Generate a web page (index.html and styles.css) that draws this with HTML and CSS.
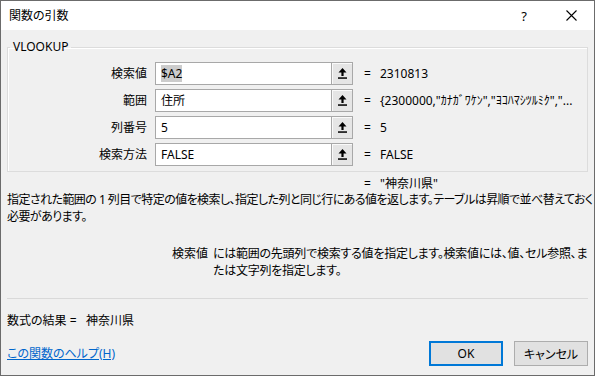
FILE: index.html
```html
<!DOCTYPE html>
<html lang="ja">
<head>
    <meta charset="UTF-8">
    <title>関数の引数</title>
    <link rel="stylesheet" href="styles.css">
</head>
<body>
    <div class="dialog">
        <div class="titlebar">
            <span class="title">関数の引数</span>
            <span class="help-btn">?</span>
            <span class="close-btn">
                <svg width="11" height="11" viewBox="0 0 11 11"><path d="M0.5 0.5 L10.5 10.5 M10.5 0.5 L0.5 10.5" stroke="#000" stroke-width="1.1" fill="none"/></svg>
            </span>
        </div>

        <div class="content">
            <fieldset class="args">
                <legend>VLOOKUP</legend>

                <div class="arg-row">
                    <span class="arg-label">検索値</span>
                    <div class="arg-input"><span class="selected">$A2</span></div>
                    <button class="ref-btn"><svg width="9" height="11" viewBox="0 0 9 11"><path d="M4.5 0 L8.5 4.5 H5.6 V8 H3.4 V4.5 H0.5 Z" fill="#000"/><rect x="0" y="9.3" width="9" height="1.5" fill="#000"/></svg></button>
                    <span class="eq">=</span>
                    <span class="arg-value">2310813</span>
                </div>

                <div class="arg-row">
                    <span class="arg-label">範囲</span>
                    <div class="arg-input">住所</div>
                    <button class="ref-btn"><svg width="9" height="11" viewBox="0 0 9 11"><path d="M4.5 0 L8.5 4.5 H5.6 V8 H3.4 V4.5 H0.5 Z" fill="#000"/><rect x="0" y="9.3" width="9" height="1.5" fill="#000"/></svg></button>
                    <span class="eq">=</span>
                    <span class="arg-value">{2300000,"ｶﾅｶﾞﾜｹﾝ","ﾖｺﾊﾏｼﾂﾙﾐｸ","...</span>
                </div>

                <div class="arg-row">
                    <span class="arg-label">列番号</span>
                    <div class="arg-input">5</div>
                    <button class="ref-btn"><svg width="9" height="11" viewBox="0 0 9 11"><path d="M4.5 0 L8.5 4.5 H5.6 V8 H3.4 V4.5 H0.5 Z" fill="#000"/><rect x="0" y="9.3" width="9" height="1.5" fill="#000"/></svg></button>
                    <span class="eq">=</span>
                    <span class="arg-value">5</span>
                </div>

                <div class="arg-row">
                    <span class="arg-label">検索方法</span>
                    <div class="arg-input">FALSE</div>
                    <button class="ref-btn"><svg width="9" height="11" viewBox="0 0 9 11"><path d="M4.5 0 L8.5 4.5 H5.6 V8 H3.4 V4.5 H0.5 Z" fill="#000"/><rect x="0" y="9.3" width="9" height="1.5" fill="#000"/></svg></button>
                    <span class="eq">=</span>
                    <span class="arg-value">FALSE</span>
                </div>
            </fieldset>

            <div class="result-row"><span class="result-eq">=</span><span>"神奈川県"</span></div>

            <p class="desc">指定された範囲の 1 列目で特定の値を検索し、指定した列と同じ行にある値を返します。テーブルは昇順で並べ替えておく<br>必要があります。</p>

            <div class="arg-help">
                <span class="arg-help-name">検索値</span>
                <p>には範囲の先頭列で検索する値を指定します。検索値には、値、セル参照、ま<br>たは文字列を指定します。</p>
            </div>

            <div class="separator"></div>

            <div class="formula-result">数式の結果 =&nbsp;&nbsp;&nbsp;神奈川県</div>

            <div class="footer">
                <a href="#" class="help-link">この関数のヘルプ(H)</a>
                <div class="buttons">
                    <button class="btn primary">OK</button>
                    <button class="btn">キャンセル</button>
                </div>
            </div>
        </div>
    </div>
</body>
</html>
```

FILE: styles.css
```css
* {
    margin: 0;
    padding: 0;
    box-sizing: border-box;
}

body {
    font-family: "Noto Sans", "Noto Sans CJK JP", sans-serif;
    font-size: 12px;
    color: #000;
    background: #f0f0f0;
}

.dialog {
    width: 595px;
    height: 376px;
    border: 1px solid #6b6b6b;
    background: #f0f0f0;
    display: flex;
    flex-direction: column;
    font-feature-settings: "palt";
}

.titlebar {
    height: 29px;
    background: #fff;
    display: flex;
    align-items: center;
    padding-left: 8px;
}

.title {
    flex: 1;
    font-size: 12px;
    line-height: 16px;
}

.help-btn {
    width: 20px;
    text-align: center;
    font-size: 13px;
    margin-right: 14px;
}

.close-btn {
    width: 46px;
    height: 29px;
    display: flex;
    align-items: center;
    justify-content: center;
}

.content {
    flex: 1;
    padding: 9px 6px 0 6px;
}

/* group box */
.args {
    border: 1px solid #dcdcdc;
    padding: 7px 0 5px 0;
    box-shadow: inset 1px 1px 0 #fff;
}

.args legend {
    margin-left: 2px;
    padding: 0 3px;
    line-height: 16px;
    font-size: 12px;
}

.arg-row {
    display: flex;
    align-items: center;
    height: 23px;
    margin-bottom: 4px;
}

.arg-row:last-child {
    margin-bottom: 0;
}

.arg-label {
    width: 139px;
    text-align: right;
    line-height: 16px;
}

.arg-input {
    width: 177px;
    height: 23px;
    margin-left: 8px;
    background: #fff;
    border: 1px solid #a8a8a8;
    padding: 0 5px;
    line-height: 21px;
    white-space: nowrap;
    overflow: hidden;
}

.selected {
    background: #cccccc;
}

.ref-btn {
    width: 21px;
    height: 23px;
    background: #e5e5e5;
    border: 1px solid #a8a8a8;
    border-left: none;
    display: flex;
    align-items: center;
    justify-content: center;
    box-shadow: inset 1px 1px 0 #fafafa;
}

.eq {
    width: 16px;
    margin-left: 11px;
    line-height: 16px;
}

.arg-value {
    line-height: 16px;
    white-space: nowrap;
}

.result-row {
    margin-top: 4px;
    padding-left: 357px;
    line-height: 15px;
    display: flex;
}

.result-eq {
    width: 16px;
}

.desc {
    line-height: 17px;
    white-space: nowrap;
    letter-spacing: -0.55px;
}

.arg-help {
    display: flex;
    margin-top: 20px;
    line-height: 17px;
}

.arg-help-name {
    width: 206px;
    text-align: right;
    padding-right: 5px;
}

.arg-help p {
    white-space: nowrap;
    letter-spacing: -0.25px;
}

.separator {
    margin-top: 19px;
    border-top: 1px solid #d9d9d9;
}

.formula-result {
    margin-top: 14px;
    line-height: 16px;
}

.footer {
    margin-top: 12px;
    display: flex;
    align-items: center;
    justify-content: space-between;
}

.help-link {
    color: #0066cc;
    text-decoration: underline;
    line-height: 16px;
}

.buttons {
    display: flex;
    gap: 11px;
}

.btn {
    width: 74px;
    height: 25px;
    font-family: inherit;
    font-size: 12px;
    font-feature-settings: "palt";
    background: #e1e1e1;
    border: 1px solid #adadad;
    color: #000;
}

.btn.primary {
    border: 2px solid #0078d7;
}
```
